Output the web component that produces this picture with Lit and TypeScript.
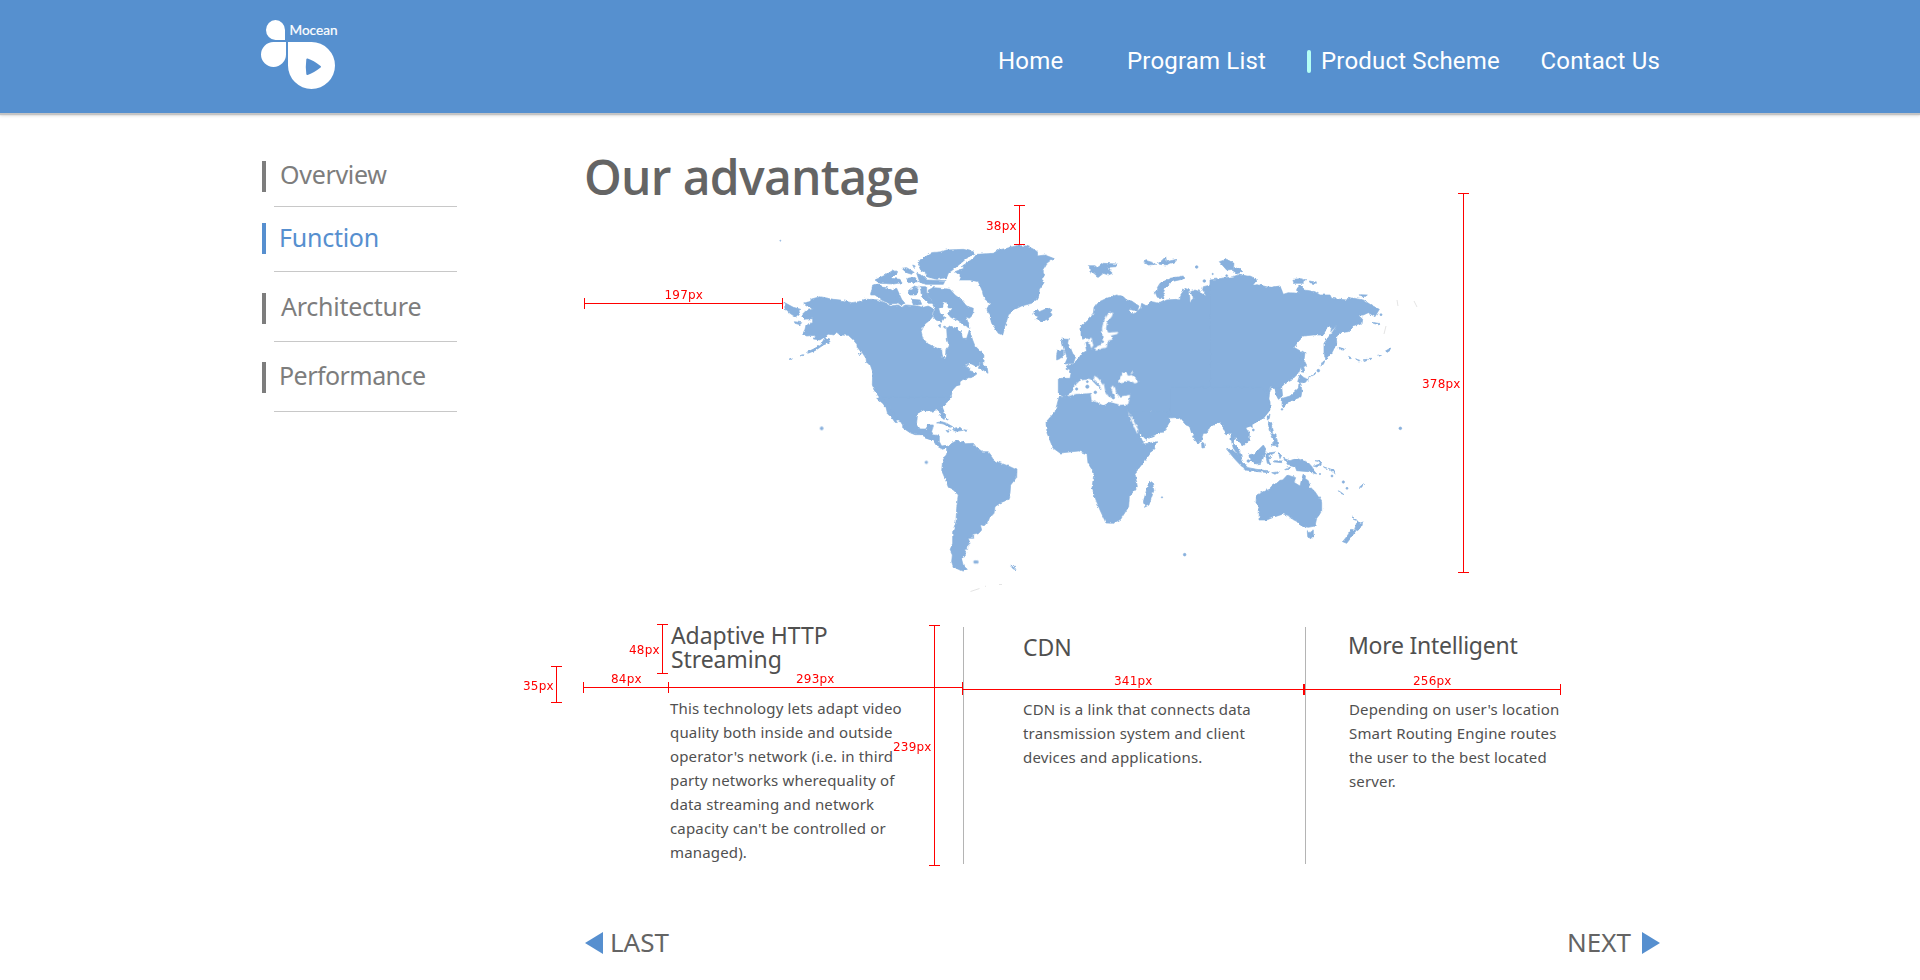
import { LitElement, html, svg, css } from "lit";
import { customElement } from "lit/decorators.js";

/* Coastlines, drawn in sheets of one third of a pixel; origin is each sheet's top-left corner. */
const SHEETS: { x: number; y: number; land: string[]; sea?: string[]; dots?: number[][] }[] = [
  {
    x: 760, y: 220,
    land: [
      "M131,249 150,262 158,268 138,272 125,285 132,298 158,296 158,308 138,315 135,328 128,342 140,348 165,346 160,357 180,360 195,350 205,342 222,345 230,337 240,345 265,346 280,360 290,372 292,382 300,392 308,400 318,415 320,428 330,432 338,455 337,495 350,525 370,550 385,570 403,600 470,600 472,580 490,570 515,574 538,568 541,590 552,598 553,590 546,562 555,548 572,535 578,510 590,497 600,495 600,485 618,472 610,478 640,470 650,462 640,455 628,452 630,443 612,440 635,432 650,440 662,426 655,445 670,450 684,460 682,445 668,430 672,405 660,392 645,378 638,360 628,330 620,355 608,355 602,335 590,325 570,318 560,325 562,360 568,378 558,390 556,415 548,410 545,390 525,382 505,372 488,355 483,335 495,312 510,300 518,290 522,268 505,258 490,262 470,258 440,255 425,262 415,255 390,258 375,248 355,240 335,238 315,238 295,245 275,248 240,240 220,238 180,230 155,237 145,245Z",
      "M505,210 520,203 545,205 570,208 585,225 605,240 620,258 640,265 638,285 628,295 618,290 630,325 610,315 590,300 572,292 563,280 580,264 565,264 560,246 552,245 548,262 536,265 540,280 555,292 545,307 528,300 520,290 525,270 515,240 503,225Z",
      "M338,195 355,192 365,200 385,205 405,215 415,235 412,250 390,252 365,240 345,225 332,225Z",
      "M398,208 410,205 425,238 435,250 425,257 410,245Z",
      "M445,212 460,200 475,205 470,225 450,225Z",
      "M480,200 500,200 500,220 520,250 505,250 485,230Z",
      "M455,238 480,240 485,253 460,255Z",
      "M345,180 370,168 385,160 400,150 410,155 405,165 395,175 420,178 428,188 400,192 360,190Z",
      "M425,145 440,143 460,155 455,163 440,158Z",
      "M440,175 465,172 475,185 445,188Z",
      "M470,160 490,168 500,180 555,182 550,193 500,193 480,188Z",
      "M475,135 480,120 500,108 515,98 545,95 560,90 610,88 640,95 645,102 620,115 590,140 565,160 560,173 530,178 500,170 495,158 482,150Z",
      "M585,155 612,145 607,138 640,115 650,103 700,100 715,90 740,85 770,77 800,78 818,86 832,95 833,108 855,105 880,115 860,130 848,150 854,165 846,175 852,188 838,208 835,235 815,250 785,258 765,268 745,285 738,310 728,345 715,340 695,310 690,290 680,268 690,250 672,235 668,215 655,185 630,180 600,180 603,168Z",
      "M822,272 832,268 838,275 855,268 870,265 876,285 865,300 845,307 828,298 835,290 822,285Z",
      "M72,247 100,262 122,268 115,278 118,284 108,292 90,280 75,265Z",
      "M103,305 125,308 120,314 105,310Z",
      "M140,397 165,385 185,370 195,352 208,358 203,370 190,375 165,392 143,400Z",
      "M120,407 132,404 128,410Z", "M90,418 97,413 96,418Z", "M294,398 304,400 300,408Z",
      "M535,316 542,313 540,322Z M550,320 556,318 556,326Z M458,135 466,138 462,143Z"
    ],
    sea: ["M618,430 630,434 628,438Z"],
    dots: [[61, 62, 1.5]]
  },
  {
    x: 780, y: 400,
    land: [
      "M300,-10 327,18 345,40 368,75 368,83 390,98 405,104 425,104 440,115 462,125 470,138 488,148 500,143 500,152 506,140 498,136 485,138 478,125 478,108 460,104 455,95 460,75 445,75 437,87 420,87 410,70 412,40 430,30 455,33 475,27 482,45 492,56 494,42 487,20 508,0 515,-10Z",
      "M290,-5 300,-10 325,15 328,28 340,45 352,68 345,67 335,52 323,42 318,22 308,10Z",
      "M470,68 485,65 500,70 518,80 510,82 490,72Z",
      "M518,92 524,84 540,82 550,91 530,94Z", "M498,91 512,94 503,97Z", "M552,89 561,91 558,95Z", "M498,54 505,58 500,61Z",
      "M500,162 503,142 515,130 530,122 540,127 550,124 556,131 580,130 590,143 608,155 625,155 638,172 638,182 660,188 690,200 711,210 710,232 692,255 690,280 682,300 662,308 645,320 642,340 628,355 622,370 612,377 601,374 605,390 598,398 578,403 578,415 565,415 570,430 560,440 560,448 552,448 560,458 545,478 550,497 562,508 548,514 535,508 520,500 515,485 517,465 510,450 518,430 518,395 528,365 530,325 535,285 520,270 505,262 495,235 485,212 488,182Z",
      "M692,498 702,500 708,509 700,507Z"
    ],
    dots: [[439, 187, 4], [125, 85, 4.5], [585, 486, 4], [591, 486, 4]]
  },
  {
    x: 1020, y: 220,
    land: [
      "M115,475 150,475 153,460 148,448 138,445 140,437 160,432 178,412 185,400 200,393 195,370 210,360 200,353 188,358 183,345 183,320 205,300 220,282 222,262 232,248 260,235 290,225 310,230 320,240 335,243 357,258 352,272 325,268 332,280 345,282 350,275 362,264 365,250 380,258 395,245 420,250 440,240 470,238 480,240 482,225 495,205 508,210 510,245 520,235 512,215 525,210 540,215 560,226 548,210 550,200 572,195 580,185 610,178 650,170 690,168 712,178 698,196 715,194 740,204 780,200 780,485 750,498 745,560 720,600 650,640 620,640 600,605 570,620 560,640 515,640 508,616 495,607 480,592 450,594 430,585 405,590 390,570 392,583 420,592 432,588 450,603 440,622 428,640 352,640 320,565 330,525 300,530 290,522 280,535 262,528 215,480 205,478 180,482 165,500 150,522 132,532 115,520Z",
      "M125,357 145,358 143,370 152,385 158,400 167,410 160,430 135,432 142,415 135,400 130,380Z",
      "M113,390 130,390 130,412 110,420 110,403Z",
      "M208,137 225,137 232,143 250,130 290,132 288,140 262,142 270,152 277,160 265,165 250,160 235,172 222,160 210,153Z",
      "M370,125 380,122 400,128 407,133 385,135Z", "M412,132 425,122 437,110 440,125 470,118 472,123 452,130 440,135Z",
      "M405,215 415,210 412,203 420,190 450,175 490,168 490,177 455,185 435,205 430,220 435,235 412,232Z",
      "M598,125 620,118 642,130 640,148 620,150Z", "M636,150 655,142 668,155 652,161Z"
    ],
    sea: [
      "M265,280 280,278 275,290 262,305 258,325 265,338 295,336 292,342 272,347 278,358 264,362 260,382 245,385 228,392 222,385 243,375 248,358 246,325 250,305Z",
      "M200,363 214,352 220,376 214,385 208,368Z",
      "M307,460 318,458 325,468 335,465 358,486 345,490 325,482 297,488 300,472Z", "M330,458 340,456 336,462Z",
      "M142,530 160,514 163,498 180,482 196,480 203,476 212,478 215,488 232,503 226,515 235,522 237,512 244,508 240,500 222,480 222,467 232,472 252,495 256,515 268,533 285,535 272,502 283,497 288,518 300,530 330,525 325,552 300,555 265,543 252,557 235,548 215,542 212,518 185,521 165,522Z",
      "M324,575 334,590 355,630 352,642 342,620Z"
    ],
    dots: [[530, 141, 4], [553, 183, 4], [202, 485, 3], [202, 500, 5], [170, 507, 3.5], [248, 365, 3], [280, 533, 4], [620, 167, 3], [226, 517, 4]]
  },
  {
    x: 1220, y: 180,
    land: [
      "M-30,300 40,290 60,282 110,298 95,316 125,318 155,322 180,318 190,343 205,338 235,340 232,325 240,315 255,330 285,335 300,345 330,345 335,355 380,360 385,352 430,360 455,376 478,388 472,398 465,410 445,398 430,405 415,406 428,418 426,432 400,440 385,455 360,458 350,470 350,490 335,520 318,540 312,520 312,490 325,472 338,455 350,438 332,455 336,443 322,440 310,465 280,465 250,468 235,485 222,502 245,515 245,560 235,580 220,595 200,605 185,620 188,650 175,658 168,640 165,625 150,627 155,617 135,630 152,632 140,645 150,665 150,690 128,718 100,725 -30,725Z",
      "M244,512 255,518 252,540 260,556 251,560 254,577 244,576Z",
      "M240,583 252,593 266,598 248,608 233,605Z", "M242,610 246,632 243,650 230,655 222,662 210,660 195,668 190,662 215,650 235,630 237,612Z",
      "M187,655 197,672 190,685 186,675Z", "M268,592 288,577 285,583Z M303,557 309,545 315,542 310,553Z",
      "M218,298 240,296 260,302 250,310 222,310Z", "M268,303 290,306 285,311 270,308Z", "M418,344 442,345 435,350 422,350Z",
      "M458,427 480,431 478,435 460,430Z",
      "M357,502 373,507 370,511 360,509Z M386,529 395,534 389,537Z M407,536 422,542 415,546Z M430,539 442,538 438,544Z M448,535 456,535 450,540Z M476,526 484,524 480,529Z M495,514 512,504 511,511 500,518Z"
    ],
    dots: [[483, 404, 3], [295, 572, 4], [186, 688, 2.5], [-22, 282, 2]]
  },
  {
    x: 1180, y: 390,
    land: [
      "M-30,-10 245,-10 258,12 270,40 265,65 245,88 215,98 217,110 208,113 200,97 193,108 208,130 208,150 190,168 178,155 165,145 160,160 172,172 183,195 185,210 160,175 153,148 153,125 138,132 132,115 120,97 100,100 70,128 65,150 55,162 45,150 30,110 18,105 -5,80 -30,75Z",
      "M285,-5 305,-5 303,15 292,22 288,5Z", "M307,25 330,18 355,-5 362,-5 360,22 340,28 312,47Z",
      "M140,178 155,178 180,200 198,232 186,230 165,208Z", "M190,230 230,238 270,243 265,248 225,244 195,240Z",
      "M207,195 225,190 240,175 250,165 258,178 252,195 245,220 225,222 210,212Z",
      "M256,190 288,186 272,195 262,196 276,204 265,208 273,222 262,220Z",
      "M265,98 276,98 275,115 278,128 268,122Z", "M272,130 288,135 294,168 275,165 282,150Z", "M262,78 270,72 268,85 262,90Z",
      "M310,205 330,212 350,205 385,218 396,230 400,240 410,252 385,245 350,242 345,228 322,222Z",
      "M400,228 420,222 415,214 405,212 420,214 424,222 410,231Z", "M430,230 442,235 435,234Z M445,235 460,240 467,252 458,246Z",
      "M275,248 298,245 285,253Z M283,212 306,213 305,218 284,216Z M296,190 305,196 300,206Z M312,240 333,230 325,238Z",
      "M230,315 255,302 270,296 275,285 290,280 300,271 308,270 322,255 347,263 342,277 360,288 366,263 370,252 376,266 385,272 390,290 405,305 415,320 425,335 425,365 410,385 405,408 385,412 362,408 352,395 338,388 330,378 310,372 285,380 260,390 237,390 238,365 228,335Z",
      "M382,422 390,428 400,420 400,438 390,448 383,440Z",
      "M517,378 532,392 538,400 548,396 545,408 533,422 524,418 530,398Z", "M515,418 528,422 515,440 500,460 488,455 500,440Z",
      "M475,302 485,308 492,314 480,309Z M64,155 72,160 74,173 66,174Z M538,292 551,281 545,292Z"
    ],
    dots: [[661, 115, 4], [220, 120, 3], [490, 276, 3.5], [501, 295, 3], [456, 258, 3], [14, 494, 4], [205, 213, 4], [420, 252, 2]]
  },
  {
    x: 0, y: 0,
    land: [
      "M3177,1192 3200,1191 3219,1182 3273,1179 3276,1200 3309,1215 3321,1206 3360,1212 3381,1215 3384,1236 3414,1290 3426,1320 3432,1332 3470,1325 3462,1345 3440,1375 3405,1420 3412,1460 3388,1490 3386,1520 3362,1558 3340,1570 3318,1569 3300,1530 3288,1500 3276,1464 3282,1419 3264,1389 3261,1362 3237,1353 3180,1359 3159,1344 3141,1299 3138,1266 3165,1236Z",
      "M3390,1236 3414,1275 3430,1310 3438,1318 3475,1300 3510,1265 3500,1235Z",
      "M3430,1505 3444,1455 3456,1443 3462,1470 3447,1515 3435,1521Z"
    ],
    dots: [[3486, 1492, 2]]
  }
];

type Mark = { x1: number; y1: number; x2: number; y2: number; label: string; tx: number; ty: number };
const MARKS: Mark[] = [
  { x1: 584.5, y1: 303.5, x2: 782.5, y2: 303.5, label: "197px", tx: 664.5, ty: 299 },
  { x1: 1019.5, y1: 205.5, x2: 1019.5, y2: 244.5, label: "38px", tx: 986, ty: 230 },
  { x1: 1463.5, y1: 193.5, x2: 1463.5, y2: 572.5, label: "378px", tx: 1422, ty: 388 },
  { x1: 662.5, y1: 624.5, x2: 662.5, y2: 673.5, label: "48px", tx: 629, ty: 654 },
  { x1: 556.5, y1: 666.5, x2: 556.5, y2: 702.5, label: "35px", tx: 523, ty: 690 },
  { x1: 583.5, y1: 687.5, x2: 668.5, y2: 687.5, label: "84px", tx: 611, ty: 683 },
  { x1: 668.5, y1: 687.5, x2: 962.5, y2: 687.5, label: "293px", tx: 796, ty: 683 },
  { x1: 934.5, y1: 625.5, x2: 934.5, y2: 865.5, label: "239px", tx: 893, ty: 751 },
  { x1: 962.5, y1: 689.5, x2: 1303.5, y2: 689.5, label: "341px", tx: 1114, ty: 685 },
  { x1: 1304.5, y1: 689.5, x2: 1560.5, y2: 689.5, label: "256px", tx: 1413, ty: 685 }
];

@customElement("world-map")
class WorldMap extends LitElement {
  static styles = css`
    :host { display: block; }
    .map { display: block; }
    .land { fill: #88b0dd; stroke: #88b0dd; stroke-width: 2; stroke-linejoin: round; }
    .sea { fill: #fff; }
    .faint { stroke: #e4e4e4; fill: none; stroke-width: 1; }
  `;
  render() {
    return html`<svg class="map" width="660" height="370" viewBox="770 230 660 370">
      <filter id="coast" filterUnits="userSpaceOnUse" x="770" y="230" width="660" height="370" color-interpolation-filters="sRGB">
        <feTurbulence type="fractalNoise" baseFrequency="0.25" numOctaves="2" seed="4" result="n" />
        <feDisplacementMap in="SourceGraphic" in2="n" scale="3.2" xChannelSelector="R" yChannelSelector="G" />
      </filter>
      <g filter="url(#coast)">
        ${SHEETS.map(s => svg`<g transform="translate(${s.x} ${s.y}) scale(0.33333)">
          ${s.land.map(d => svg`<path class="land" d=${d} />`)}
        </g>`)}
        ${SHEETS.map(s => svg`<g transform="translate(${s.x} ${s.y}) scale(0.33333)">
          ${(s.sea ?? []).map(d => svg`<path class="sea" d=${d} />`)}
        </g>`)}
      </g>
      ${SHEETS.map(s => svg`<g transform="translate(${s.x} ${s.y}) scale(0.33333)">
        ${(s.dots ?? []).map(c => svg`<circle class="land" cx=${c[0]} cy=${c[1]} r=${c[2]} />`)}
      </g>`)}
      <path class="faint" d="M970.5 591.5l9-3M985 586.500l1-.5M999 584.500h3M1384 334l2-8M1397 300l1 6M1414 301l3 6" />
    </svg>`;
  }
}

@customElement("size-marks")
class SizeMarks extends LitElement {
  static styles = css`
    :host { display: block; }
    .layer { display: block; }
    .rule { stroke: #f00; stroke-width: 1; fill: none; shape-rendering: crispEdges; }
    .label { fill: #f00; font: 12px "DejaVu Sans", sans-serif; letter-spacing: .2px; }
  `;
  render() {
    return html`<svg class="layer" width="1920" height="980">
      ${MARKS.map(m => {
        const caps = m.x1 === m.x2
          ? `M${m.x1 - 5.5} ${m.y1}h11M${m.x1 - 5.5} ${m.y2}h11`
          : `M${m.x1} ${m.y1 - 5.5}v11M${m.x2} ${m.y2 - 5.5}v11`;
        return svg`<path class="rule" d="M${m.x1} ${m.y1}L${m.x2} ${m.y2}${caps}" />
          <text class="label" x=${m.tx} y=${m.ty}>${m.label}</text>`;
      })}
    </svg>`;
  }
}

@customElement("app-root")
class AppRoot extends LitElement {
  static styles = css`
    :host { display: block; position: relative; width: 1920px; height: 980px; overflow: hidden; background: #fff;
      font-family: "Noto Sans", "Open Sans", sans-serif; color: #505050; }
    .header { display: flex; justify-content: space-between; height: 113px; padding: 0 260px 0 260px; box-sizing: border-box;
      background: #5690cf; box-shadow: 0 1px 1px 1px #c4c4c4, 0 3px 3px rgba(0,0,0,.12); }
    .logo { display: block; }
    .brand { font: 13px Lato, sans-serif; fill: #fff; stroke: #fff; stroke-width: .2; }
    .nav { display: flex; padding-top: 46px; font: 24px/30px Roboto, sans-serif; letter-spacing: .18px; color: #fff; }
    .nav-item { white-space: nowrap; }
    .home { width: 129px; } .programs { width: 180px; } .contact { width: 119.5px; }
    .product { width: 233.5px; display: flex; }
    .tick { width: 4px; height: 23px; margin: 4px 10px 0 0; border-radius: 2px; background: #b4fff5; }
    .body { display: flex; padding: 0 260px 0 262px; }
    .side { width: 322px; display: flex; flex-direction: column; padding-top: 48px; box-sizing: border-box; }
    .entry { display: flex; height: 31px; color: #7d7d7d; font-size: 25px; line-height: 27px; white-space: nowrap; }
    .entry::before { content: ""; width: 4px; height: 31px; background: #7d7d7d; margin-right: 14px; }
    .entry.on { color: #568fcf; } .entry.on::before { background: #568fcf; }
    .line { height: 1px; background: #c8c8c8; margin-left: 12px; width: 183px; }
    .w0 { letter-spacing: -.3px; }
    .w1 { letter-spacing: -.25px; line-height: 29px; }
    .w1.entry::before { margin-right: 13px; }
    .w2 { letter-spacing: -.25px; }
    .w2.entry::before { margin-right: 15px; }
    .w3 { letter-spacing: -.55px; }
    .w3.entry::before { margin-right: 13px; }
    .main { flex: 1; }
    .title { margin: 32px 0 0; font: 600 48px/64px "Open Sans", sans-serif; letter-spacing: -.7px; color: #646464; white-space: nowrap; }
    .map-wrap { padding: 21px 0 0 186px; height: 418px; box-sizing: border-box; }
    .cards { display: flex; height: 237px; }
    .card { display: flex; flex-direction: column; box-sizing: border-box; white-space: nowrap; }
    .c0 { width: 379px; padding-left: 86px; }
    .c1 { width: 342px; padding-left: 59px; border-left: 1px solid #b4b4b4; }
    .c2 { padding-left: 43px; border-left: 1px solid #b4b4b4; }
    .head { height: 70px; font-size: 23px; line-height: 24px; box-sizing: border-box; }
    .c0 .head { margin: -4px 0 0 1px; height: 74px; letter-spacing: -.1px; }
    .c1 .head { padding-top: 8px; }
    .c2 .head { padding-top: 6px; letter-spacing: -.25px; margin-left: -1px; }
    .text { font-size: 15px; line-height: 24px; letter-spacing: .16px; }
    .pager { display: flex; justify-content: space-between; align-items: center; margin-top: 62px; height: 34px; font-size: 26px; color: #646464; }
    .page { display: flex; align-items: center; gap: 7px; line-height: 32px; }
    .word { padding-bottom: 2px; }
    .next { gap: 11px; }
    .arrow { fill: #568fcf; display: block; }
    .marks { position: absolute; left: 0; top: 0; pointer-events: none; }
  `;

  render() {
    const side = [["Overview", 14, 16], ["Function", 17, 21], ["Architecture", 17, 20], ["Performance", 18, 0]] as [string, number, number][];
    return html`
      <header class="header">
        <svg class="logo" width="90" height="100" viewBox="260 0 90 100">
          <path fill="#fff" d="M285 40H275.500A9.500 10 0 1 1 285 30ZM286 42V54.500A12.500 12.500 0 1 1 273.500 42ZM288 42H311.500A23.500 23.500 0 1 1 288 65.500Z" />
          <path fill="#568fcf" stroke="#568fcf" stroke-linejoin="round" stroke-width="2" d="M307.300 59.500Q313 61.500 320 66.700Q313 72.200 307.300 74Q306.300 67 307.300 59.500Z" />
          <text class="brand" x="289.500" y="35" textLength="48" lengthAdjust="spacingAndGlyphs">Mocean</text>
        </svg>
        <nav class="nav">
          <span class="nav-item home">Home</span>
          <span class="nav-item programs">Program List</span>
          <span class="nav-item product"><i class="tick"></i>Product Scheme</span>
          <span class="nav-item contact">Contact Us</span>
        </nav>
      </header>
      <div class="body">
        <aside class="side">
          ${side.map(([name, below, after], i) => html`
            <div class="entry w${i} ${i === 1 ? "on" : ""}">${name}</div>
            <div class="line" style="margin-top:${below}px;margin-bottom:${after}px"></div>`)}
        </aside>
        <main class="main">
          <h1 class="title">Our advantage</h1>
          <div class="map-wrap"><world-map></world-map></div>
          <section class="cards">
            <div class="card c0">
              <div class="head">Adaptive HTTP<br />Streaming</div>
              <div class="text">This technology lets adapt video<br />quality both inside and outside<br />operator's network (i.e. in third<br />party networks wherequality of<br />data streaming and network<br />capacity can't be controlled or<br />managed).</div>
            </div>
            <div class="card c1">
              <div class="head">CDN</div>
              <div class="text">CDN is a link that connects data<br />transmission system and client<br />devices and applications.</div>
            </div>
            <div class="card c2">
              <div class="head">More Intelligent</div>
              <div class="text">Depending on user's location<br />Smart Routing Engine routes<br />the user to the best located<br />server.</div>
            </div>
          </section>
          <footer class="pager">
            <span class="page"><svg class="arrow" width="19" height="22"><path d="M1 11L19 0V22Z" /></svg><span class="word">LAST</span></span>
            <span class="page next"><span class="word">NEXT</span><svg class="arrow" width="18" height="22"><path d="M18 11L0 0V22Z" /></svg></span>
          </footer>
        </main>
      </div>
      <size-marks class="marks"></size-marks>
    `;
  }
}
